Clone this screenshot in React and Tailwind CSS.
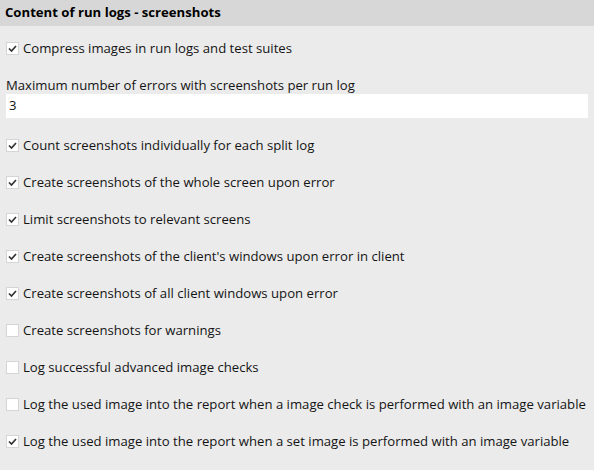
const rows = [
  { label: "Count screenshots individually for each split log", checked: true },
  { label: "Create screenshots of the whole screen upon error", checked: true },
  { label: "Limit screenshots to relevant screens", checked: true },
  { label: "Create screenshots of the client's windows upon error in client", checked: true },
  { label: "Create screenshots of all client windows upon error", checked: true },
  { label: "Create screenshots for warnings", checked: false },
  { label: "Log successful advanced image checks", checked: false },
  {
    label:
      "Log the used image into the report when a image check is performed with an image variable",
    checked: false,
  },
  {
    label:
      "Log the used image into the report when a set image is performed with an image variable",
    checked: true,
  },
];

function Check({ label, checked }) {
  return (
    <label className="flex items-center h-[37px] gap-[4px] pl-[6px]">
      <span className="w-[13px] h-[13px] bg-white border border-[#d5d5d5] flex items-center justify-center shrink-0">
        {checked && (
          <svg width="9" height="9" viewBox="0 0 9 9">
            <path d="M1 4.5 L3.5 7 L8 2" fill="none" stroke="#333" strokeWidth="1.7" />
          </svg>
        )}
      </span>
      <span className="whitespace-nowrap">{label}</span>
    </label>
  );
}

export default function App() {
  return (
    <div className="w-[594px] h-[470px] bg-[#ebebeb] text-[#141414] text-[13.15px] font-['Open_Sans',sans-serif] overflow-hidden">
      <div className="h-[26px] bg-[#d7d7d7] flex items-center pl-[5px] font-bold text-black">
        Content of run logs - screenshots
      </div>
      <div className="pt-[4px]">
        <Check label="Compress images in run logs and test suites" checked />
        <div className="pl-[6px] mt-[10px] h-[17px] leading-[17px]">
          Maximum number of errors with screenshots per run log
        </div>
        <div className="ml-[6px] mr-[6px] h-[24px] bg-white flex items-center pl-[3px]">3</div>
        <div className="mt-[9px]">
          {rows.map((r, i) => (
            <Check key={i} {...r} />
          ))}
        </div>
      </div>
    </div>
  );
}
